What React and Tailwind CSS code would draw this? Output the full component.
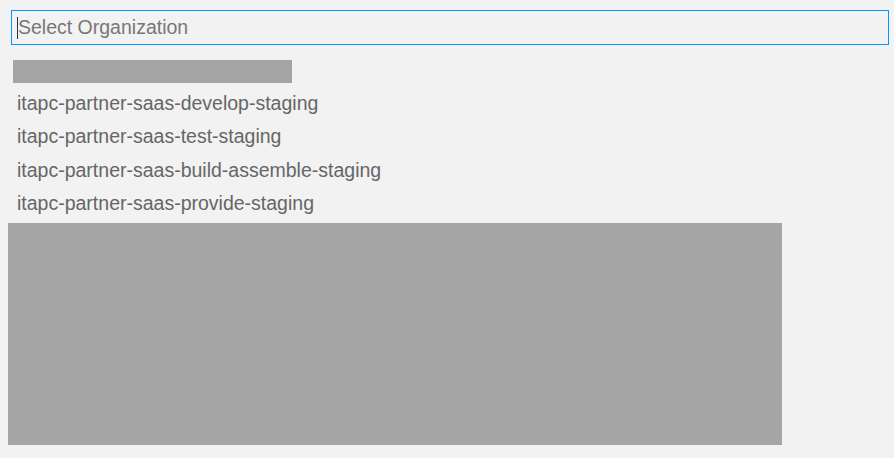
export default function App() {
  const items = [
    "itapc-partner-saas-develop-staging",
    "itapc-partner-saas-test-staging",
    "itapc-partner-saas-build-assemble-staging",
    "itapc-partner-saas-provide-staging",
  ];
  return (
    <div
      className="w-[894px] h-[458px] bg-[#f2f2f2] overflow-hidden"
      style={{ fontFamily: '"Liberation Sans", Arial, sans-serif' }}
    >
      <div className="pt-[10px] pl-[11px] pr-[5px]">
        <div className="h-[35px] border border-[#0096ff] flex items-center pl-[5px] text-[19.5px] text-[#777777]">
          <span className="w-px h-[22px] bg-[#333]" />
          <span>Select Organization</span>
        </div>
      </div>
      <div className="pl-[13px] mt-[15px]">
        <div className="w-[279px] h-[23px] bg-[#a5a5a5]" />
      </div>
      <div className="mt-[4px] pl-[17px]">
        {items.map((t) => (
          <div key={t} className="h-[33.33px] flex items-center text-[19.5px] text-[#666666]">
            {t}
          </div>
        ))}
      </div>
      <div className="pl-[8px] mt-[3px]">
        <div className="w-[774px] h-[222px] bg-[#a5a5a5]" />
      </div>
    </div>
  );
}
